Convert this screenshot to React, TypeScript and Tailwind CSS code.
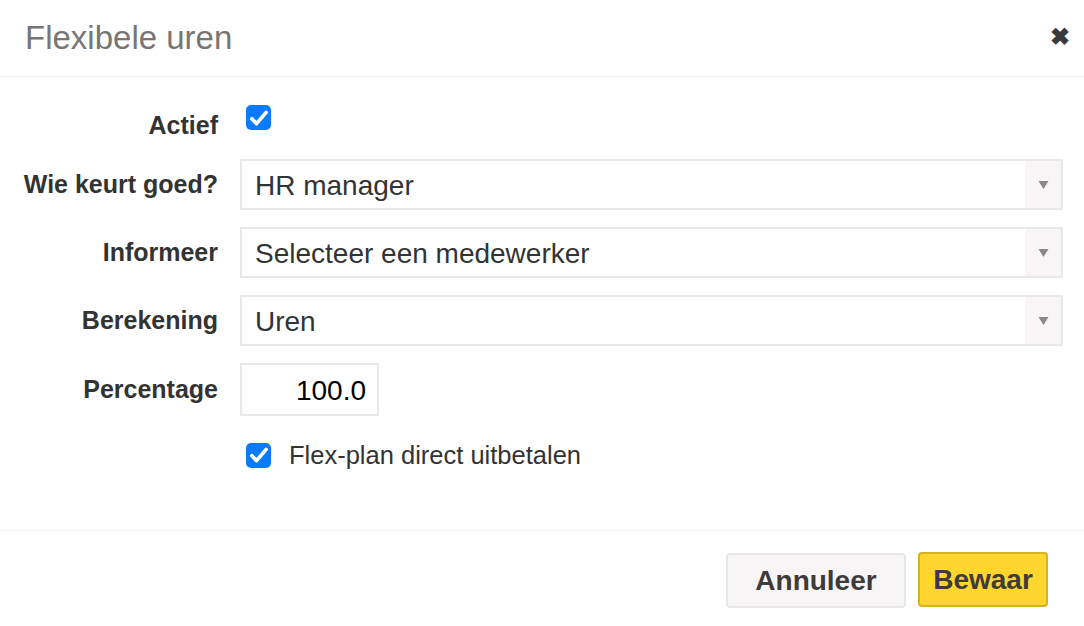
import React from 'react';

const font = { fontFamily: '"Liberation Sans", Arial, Helvetica, sans-serif' };

function Check() {
  return (
    <span className="flex h-[25px] w-[25px] items-center justify-center rounded-[5px] bg-[#0a7bff]">
      <svg viewBox="0 0 16 16" className="h-[22px] w-[22px]" fill="none">
        <path d="M2.8 8.6l3.4 3.5 7-8.2" stroke="#fff" strokeWidth="2.7" strokeLinecap="round" strokeLinejoin="round" />
      </svg>
    </span>
  );
}

function Select({ value }: { value: string }) {
  return (
    <div className="flex h-[51px] flex-1 items-stretch border-2 border-[#ece8e8] bg-white">
      <div className="flex flex-1 items-center pl-[13px] pt-[3px] text-[28px] text-[#333]">{value}</div>
      <div className="flex w-[36px] items-center justify-center bg-[#f7f5f5]">
        <svg viewBox="0 0 10 8" className="h-[8px] w-[11px]">
          <path d="M0 0h10L5 8z" fill="#8a8888" />
        </svg>
      </div>
    </div>
  );
}

function Row({ label, children, className = '' }: { label: string; children: React.ReactNode; className?: string }) {
  return (
    <div className={`flex items-center ${className}`}>
      <div className="w-[218px] shrink-0 text-right text-[25px] font-bold text-[#333]">{label}</div>
      <div className="ml-[22px] flex flex-1">{children}</div>
    </div>
  );
}

export default function App() {
  return (
    <div className="h-[626px] w-[1084px] bg-white" style={font}>
      <div className="flex h-[77px] items-center justify-between border-b border-[#f3f3f3] pl-[25px] pr-[14px]">
        <h1 className="text-[33px] font-normal text-[#787674]">Flexibele uren</h1>
        <span className="pb-[2px] text-[24px] font-bold leading-none text-[#3a3a3a]">✖</span>
      </div>

      <div className="pr-[21px]">
        <div className="mt-[23px] flex h-[51px] items-start">
          <div className="flex h-[51px] w-[218px] shrink-0 items-center justify-end text-[25px] font-bold text-[#333]">Actief</div>
          <div className="ml-[28px] mt-[5px]">
            <Check />
          </div>
        </div>

        <Row label="Wie keurt goed?" className="mt-[8px]">
          <Select value="HR manager" />
        </Row>
        <Row label="Informeer" className="mt-[17px]">
          <Select value="Selecteer een medewerker" />
        </Row>
        <Row label="Berekening" className="mt-[17px]">
          <Select value="Uren" />
        </Row>
        <Row label="Percentage" className="mt-[17px]">
          <div className="flex h-[53px] w-[139px] items-center justify-end border-2 border-[#ece8e8] pr-[11px] pt-[2px] text-[28px] text-black">
            100.0
          </div>
        </Row>

        <div className="ml-[246px] mt-[20px] flex items-center">
          <Check />
          <span className="ml-[18px] text-[25.5px] text-[#333]">Flex-plan direct uitbetalen</span>
        </div>
      </div>

      <div className="mt-[56px] flex justify-end gap-[12px] border-t border-[#f3f3f3] pr-[36px] pt-[22px]">
        <button className="h-[55px] w-[180px] rounded-[4px] border-2 border-[#e8e6e6] bg-[#f7f5f6] text-[28px] font-bold text-[#3f3b39]">
          Annuleer
        </button>
        <button className="-mt-[1px] h-[55px] w-[130px] rounded-[4px] border-2 border-[#d6b21e] bg-[#fed62f] text-[28px] font-bold text-[#3f3b39]">
          Bewaar
        </button>
      </div>
    </div>
  );
}
